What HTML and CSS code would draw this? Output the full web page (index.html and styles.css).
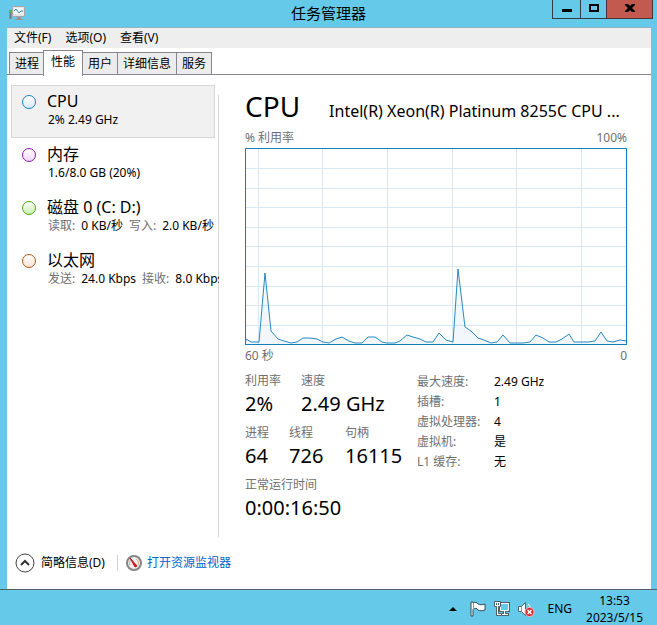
FILE: index.html
```html
<!DOCTYPE html>
<html lang="zh-CN">
<head>
    <meta charset="UTF-8">
    <meta name="viewport" content="width=device-width, initial-scale=1.0">
    <title>任务管理器</title>
    <link rel="stylesheet" href="styles.css">
</head>
<body>

<!--标题栏-->
<header class="titlebar">
    <svg class="app_icon" width="17" height="16" viewBox="0 0 17 16">
        <path d="M1.5 5v9" stroke="#777" stroke-width="2"/>
        <path d="M1.5 5v3" stroke="#3fc43f" stroke-width="2"/>
        <rect x="3.5" y="1.5" width="12" height="10" rx="1" fill="#e4e4e4" stroke="#a9a5a5"/>
        <rect x="5" y="3" width="9" height="6" fill="#f4fbff"/>
        <path d="M5 6l2-2 3 4 2-2h2" fill="none" stroke="#2d83ba"/>
        <path d="M8 12h4v2h2v1H6v-1h2z" fill="#999"/>
    </svg>
    <h1>任务管理器</h1>
    <div class="controls">
        <button type="button" class="btn_min" aria-label="最小化">
            <svg width="10" height="8" viewBox="0 0 10 8"><path d="M0 5h10v3H0z"/></svg>
        </button>
        <button type="button" class="btn_max" aria-label="最大化">
            <svg width="10" height="8" viewBox="0 0 10 8"><path d="M1 1h8v6H1z" fill="none" stroke="#000" stroke-width="2"/></svg>
        </button>
        <button type="button" class="btn_close" aria-label="关闭">
            <svg width="10" height="8" viewBox="0 0 10 8"><path d="M0 0h3l2 2 2-2h3v1L7 4l3 3v1H7L5 6 3 8H0V7l3-3-3-3z"/></svg>
        </button>
    </div>
</header>

<main class="window">
    <!--菜单-->
    <nav class="menu">
        <button type="button">文件(F)</button>
        <button type="button">选项(O)</button>
        <button type="button">查看(V)</button>
    </nav>

    <!--选项卡-->
    <div class="tabs" role="tablist">
        <button type="button" role="tab">进程</button>
        <button type="button" role="tab" class="active" aria-selected="true">性能</button>
        <button type="button" role="tab">用户</button>
        <button type="button" role="tab">详细信息</button>
        <button type="button" role="tab">服务</button>
    </div>

    <div class="content">
        <!--左侧资源列表-->
        <div class="sidebar">
            <button type="button" class="item selected">
                <span class="ring ring_cpu"></span>
                <span class="item_name">CPU</span>
                <span class="item_info">2% 2.49 GHz</span>
            </button>
            <button type="button" class="item">
                <span class="ring ring_memory"></span>
                <span class="item_name">内存</span>
                <span class="item_info">1.6/8.0 GB (20%)</span>
            </button>
            <button type="button" class="item">
                <span class="ring ring_disk"></span>
                <span class="item_name">磁盘 0 (C: D:)</span>
                <span class="item_info"><i>读取:</i><b>0 KB/秒</b><i>写入:</i><b>2.0 KB/秒</b></span>
            </button>
            <button type="button" class="item">
                <span class="ring ring_net"></span>
                <span class="item_name">以太网</span>
                <span class="item_info"><i>发送:</i><b>24.0 Kbps</b><i>接收:</i><b>8.0 Kbps</b></span>
            </button>
        </div>

        <!--右侧详情-->
        <section class="detail">
            <div class="heading">
                <h2>CPU</h2>
                <p>Intel(R) Xeon(R) Platinum 8255C CPU ...</p>
            </div>
            <div class="axis">
                <span>% 利用率</span>
                <span>100%</span>
            </div>
            <svg class="chart" viewBox="0 0 382 197" preserveAspectRatio="none">
                <path class="grid" d="M13.5 0v197M77.5 0v197M142.5 0v197M207.5 0v197M271.5 0v197M336.5 0v197
                    M0 20.5h382M0 40.5h382M0 59.5h382M0 79.5h382M0 98.5h382M0 118.5h382M0 138.5h382M0 157.5h382M0 177.5h382"/>
                <path class="usage" d="M0 197L1 191 6 194 14 194 20 125 26 183 33 191 39 193 46 195 52 194 58 190 65 190 72 191
                    78 194 84 195 91 191 97 189 104 193 110 195 117 195 123 189 130 189 137 194 142 195 150 195 155 193
                    162 187 168 189 175 191 181 194 188 194 194 185 201 192 208 194 213 121 220 179 226 183 233 190
                    239 192 246 195 252 194 258 187 265 195 278 195 285 194 291 187 298 190 304 194 311 194 317 191
                    324 186 329 194 343 194 350 193 356 184 362 193 368 194 375 192 382 193V197z"/>
                <rect class="frame" x="0.5" y="0.5" width="381" height="196"/>
            </svg>
            <div class="axis axis_bottom">
                <span>60 秒</span>
                <span>0</span>
            </div>

            <div class="stats">
                <div class="figures">
                    <dl>
                        <div class="usage_col"><dt>利用率</dt><dd>2%</dd></div>
                        <div><dt>速度</dt><dd>2.49 GHz</dd></div>
                    </dl>
                    <dl>
                        <div class="process_col"><dt>进程</dt><dd>64</dd></div>
                        <div class="thread_col"><dt>线程</dt><dd>726</dd></div>
                        <div><dt>句柄</dt><dd>16115</dd></div>
                    </dl>
                    <dl>
                        <div><dt>正常运行时间</dt><dd>0:00:16:50</dd></div>
                    </dl>
                </div>
                <table class="specs">
                    <tr><th scope="row">最大速度:</th><td>2.49 GHz</td></tr>
                    <tr><th scope="row">插槽:</th><td>1</td></tr>
                    <tr><th scope="row">虚拟处理器:</th><td>4</td></tr>
                    <tr><th scope="row">虚拟机:</th><td>是</td></tr>
                    <tr><th scope="row">L1 缓存:</th><td>无</td></tr>
                </table>
            </div>
        </section>
    </div>

    <footer class="bottom">
        <button type="button" class="fewer">
            <svg width="20" height="20" viewBox="0 0 20 20">
                <circle cx="10" cy="10" r="9" fill="#fff" stroke="#444"/>
                <path d="M6 12l4-4 4 4" fill="none" stroke="#333" stroke-width="2"/>
            </svg>
            简略信息(D)
        </button>
        <a href="#">
            <svg width="16" height="16" viewBox="0 0 16 16">
                <circle cx="8" cy="8" r="7" fill="#f2efec" stroke="#858585" stroke-width="2"/>
                <path d="M4 10a4.500 4.500 0 0 1 2-6" fill="none" stroke="#aaa"/>
                <path d="M10 4a4.500 4.500 0 0 1 2 6" fill="none" stroke="#e9a36b"/>
                <path d="M4 3l7 8-2 1z" fill="#c8141c" stroke="#c8141c"/>
            </svg>
            打开资源监视器
        </a>
    </footer>
</main>

<!--任务栏-->
<div class="taskbar">
    <svg class="tray_icon arrow" width="8" height="4" viewBox="0 0 8 4"><path d="M4 0l4 4H0z"/></svg>
    <svg class="tray_icon" width="16" height="16" viewBox="0 0 16 16">
        <path d="M1 1h2v1c2-1 4-1 5 1 2 1 4 1 7 0v6c-3 1-5 1-7 0-1-2-3-2-5-1v7H1z" fill="#fff" stroke="#3b4a52"/>
        <path d="M3.500 2v7" stroke="#8798a0"/>
    </svg>
    <svg class="tray_icon" width="16" height="16" viewBox="0 0 16 16">
        <path d="M6.500 2.500h8v7h-8z" fill="#65c9ea" stroke="#4f626b" stroke-width="3"/>
        <path d="M10.500 10v3M6 13.500h9" stroke="#4f626b" stroke-width="3"/>
        <path d="M6.500 2.500h8v7h-8z" fill="#65c9ea" stroke="#fff"/>
        <path d="M10.500 10v3M7 13.500h7" stroke="#fff"/>
        <path d="M0.500 0.500h6v5h-2v7h3v2h-5v-9h-2z" fill="#fff" stroke="#4f626b"/>
        <path d="M2.500 2v2M4.500 2v2" stroke="#4f626b"/>
    </svg>
    <svg class="tray_icon" width="17" height="16" viewBox="0 0 17 16">
        <path d="M0.500 5.500h3l4-4v13l-4-4h-3z" fill="#fff" stroke="#4f626b"/>
        <path d="M3.500 6v4" stroke="#8798a0"/>
        <path d="M10 3c2 2 2 3 2 5" fill="none" stroke="#fff"/>
        <circle cx="11.500" cy="11" r="4.500" fill="#d9252c" stroke="#f4b9bb"/>
        <path d="M9.500 9l4 4m0-4l-4 4" stroke="#fff" stroke-width="1.500"/>
    </svg>
    <button type="button" class="lang">ENG</button>
    <div class="clock">
        <time>13:53</time>
        <time>2023/5/15</time>
    </div>
</div>

</body>
</html>
```

FILE: styles.css
```css
* {
    margin: 0;
    padding: 0;
    box-sizing: border-box;
}

body {
    display: flex;
    flex-direction: column;
    min-height: 100vh;
    background-color: #65c9ea;
    color: #000;
    font: 12px/18px "Segoe UI", "Noto Sans", "Noto Sans CJK SC", sans-serif;
}

button {
    border: none;
    background: none;
    color: inherit;
    font: inherit;
}

svg {
    display: block;
    flex: none;
}

/*标题栏*/
.titlebar {
    display: grid;
    grid-template-columns: 1fr auto 1fr;
    height: 27px;
}

.app_icon {
    margin: 5px 0 0 9px;
}

.titlebar h1 {
    font-size: 15px;
    font-weight: normal;
    line-height: 26px;
}

.controls {
    display: flex;
    justify-content: flex-end;
    height: 19px;
    padding-right: 4px;
}

.controls button {
    display: flex;
    justify-content: center;
    align-items: center;
    border: 1px solid #333c42;
    border-width: 0 0 1px 1px;
    padding-bottom: 2px;
}

.btn_min {
    width: 28px;
}

.btn_max {
    width: 26px;
}

.controls .btn_close {
    width: 47px;
    border-color: #4a3030;
    border-right-width: 1px;
    background-color: #c35a50;
}

/*窗口*/
.window {
    flex: 1;
    display: flex;
    flex-direction: column;
    margin: 0 6px 0 7px;
    border-top: 1px solid #8fb3c2;
    background-color: #fff;
}

.menu {
    display: flex;
    gap: 14px;
    height: 20px;
    padding-left: 7px;
    background-color: #eee;
}

.tabs {
    display: flex;
    align-items: flex-end;
    height: 27px;
    padding-left: 2px;
    border-bottom: 1px solid #878791;
}

.tabs button {
    height: 22px;
    padding: 0 5px;
    border: 1px solid #878791;
    border-width: 1px 1px 0 0;
    background-color: #ececec;
}

.tabs button:first-child {
    border-left-width: 1px;
}

.tabs .active {
    height: 26px;
    margin: 0 0 -2px -2px;
    padding: 0 7px 3px;
    border-left-width: 1px;
    background-color: #fff;
}

.content {
    flex: 1;
    display: flex;
}

/*左侧*/
.sidebar {
    flex: none;
    width: 212px;
    padding: 10px 0 0 4px;
    overflow: hidden;
    /*分隔线上方留空*/
    background: linear-gradient(#d9d9d9, #d9d9d9) no-repeat right 20px / 1px 100%;
}

.item {
    display: grid;
    grid-template-columns: 25px 1fr;
    align-content: start;
    width: 204px;
    height: 53px;
    padding: 5px 0 0 10px;
    border: 1px solid transparent;
    text-align: left;
    white-space: nowrap;
}

.item.selected {
    border-color: #d5d5d5;
    background-color: #f1f1f1;
}

.ring {
    width: 14px;
    height: 14px;
    margin-top: 4px;
    border: 1px solid;
    border-radius: 50%;
}

.ring_cpu {
    border-color: #1a80b8;
    background: linear-gradient(#fff, #d8eaf6);
}

.ring_memory {
    border-color: #8c1aa8;
    background: linear-gradient(#fff, #ecd8f6);
}

.ring_disk {
    border-color: #4ca80c;
    background: linear-gradient(#fff, #c8efb0);
}

.ring_net {
    border-color: #a85a1a;
    background: linear-gradient(#fff, #fbe3d4);
}

.item_name {
    font-size: 16px;
    line-height: 20px;
}

.item_info {
    grid-column: 2;
    display: flex;
    gap: 6px;
    padding-left: 1px;
}

.item_info i {
    color: #707070;
    font-style: normal;
}

.item_info b {
    font-weight: normal;
}

/*右侧*/
.detail {
    flex: 1;
    min-width: 0;
    padding: 12px 24px 0 26px;
}

.heading {
    display: flex;
    align-items: baseline;
    gap: 29px;
    height: 42px;
}

.heading h2 {
    font-size: 28px;
    font-weight: normal;
    line-height: 38px;
}

.heading p {
    font-size: 16px;
    line-height: 24px;
    white-space: nowrap;
}

.axis {
    display: flex;
    justify-content: space-between;
    height: 19px;
    color: #707070;
}

.axis_bottom {
    height: 27px;
    padding-top: 2px;
}

.chart {
    width: 100%;
    height: 197px;
}

.chart path,
.chart rect {
    vector-effect: non-scaling-stroke;
}

.grid {
    fill: none;
    stroke: #d9e9f4;
}

.usage {
    fill: #117dbb;
    fill-opacity: 0.06;
    stroke: #117dbb;
    stroke-opacity: 0.9;
}

.frame {
    fill: none;
    stroke: #117dbb;
}

.stats {
    display: flex;
}

.figures {
    width: 172px;
}

.figures dl {
    display: flex;
    height: 52px;
    white-space: nowrap;
}

.figures dt {
    color: #707070;
}

.figures dd {
    font-size: 20px;
    line-height: 28px;
}

.usage_col {
    width: 56px;
}

.process_col {
    width: 44px;
}

.thread_col {
    width: 56px;
}

.specs {
    align-self: flex-start;
    border-collapse: collapse;
    line-height: 20px;
    text-align: left;
}

.specs th {
    width: 77px;
    color: #707070;
    font-weight: normal;
}

/*底部*/
.bottom {
    display: flex;
    align-items: center;
    height: 52px;
    padding-left: 8px;
}

.fewer,
.bottom a {
    display: flex;
    align-items: center;
    gap: 6px;
}

.fewer {
    padding-right: 12px;
}

.bottom a {
    gap: 5px;
    padding-left: 8px;
    border-left: 1px solid #d0d0d0;
    color: #0066cc;
    line-height: 16px;
    text-decoration: none;
}

/*任务栏*/
.taskbar {
    display: flex;
    justify-content: flex-end;
    height: 36px;
    padding-right: 14px;
    border-top: 1px solid #4f626b;
}

.tray_icon {
    margin: 11px 8px 0 0;
}

.arrow {
    margin: 17px 13px 0 0;
}

.lang {
    height: 38px;
    margin: 0 14px 0 4px;
}

.clock {
    padding-top: 2px;
}

.clock time {
    display: block;
    line-height: 17px;
    text-align: center;
}
```
